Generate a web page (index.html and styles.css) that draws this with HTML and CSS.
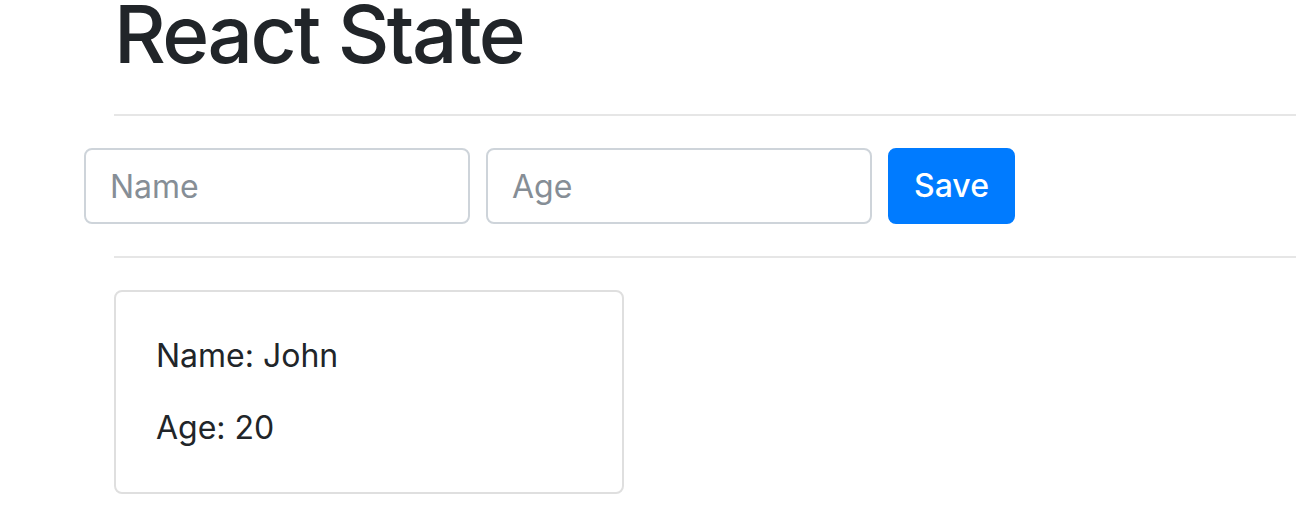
FILE: index.html
```html
<!DOCTYPE html>
<html lang="en">
<head>
<meta charset="utf-8">
<title>React State</title>
<link rel="stylesheet" href="styles.css">
</head>
<body>
<div class="container">
  <h1 class="title">React State</h1>
  <hr class="divider">
  <form class="form-row">
    <input class="field" type="text" placeholder="Name">
    <input class="field" type="text" placeholder="Age">
    <button class="btn-save" type="button">Save</button>
  </form>
  <hr class="divider">
  <div class="card">
    <p class="card-line">Name: John</p>
    <p class="card-line">Age: 20</p>
  </div>
</div>
</body>
</html>
```

FILE: styles.css
```css
html, body {
  margin: 0;
  padding: 0;
  background: #fff;
}
body {
  font-family: Inter, "Noto Sans", "Liberation Sans", sans-serif;
  color: #212529;
  overflow: hidden;
}
.container {
  padding-left: 114px;
}
.title {
  margin: 0 0 46px 0;
  font-size: 80px;
  line-height: 68px;
  font-weight: 500;
  letter-spacing: -2.5px;
  color: #212529;
}
.divider {
  margin: 32px 0;
  border: 0;
  border-top: 2px solid #e6e6e6;
  height: 0;
}
.form-row {
  display: flex;
  gap: 16px;
  margin: 0 0 0 -30px;
  align-items: stretch;
}
.field {
  box-sizing: border-box;
  width: 386px;
  height: 76px;
  border: 2px solid #ced4da;
  border-radius: 8px;
  padding: 12px 24px;
  font-family: inherit;
  font-size: 32px;
  line-height: 48px;
  color: #495057;
  background: #fff;
  outline: none;
}
.field::placeholder {
  color: #868e96;
  opacity: 1;
}
.btn-save {
  box-sizing: border-box;
  height: 76px;
  padding: 12px 24px;
  border: 2px solid #007bff;
  border-radius: 8px;
  background: #007bff;
  color: #fff;
  font-family: inherit;
  font-size: 32px;
  line-height: 48px;
  font-weight: 500;
}
.card {
  box-sizing: border-box;
  width: 510px;
  height: 204px;
  border: 2px solid #dfdfdf;
  border-radius: 8px;
  padding: 40px 40px;
}
.card-line {
  margin: 0;
  font-size: 32px;
  line-height: 48px;
}
.card-line + .card-line {
  margin-top: 24px;
}
```
